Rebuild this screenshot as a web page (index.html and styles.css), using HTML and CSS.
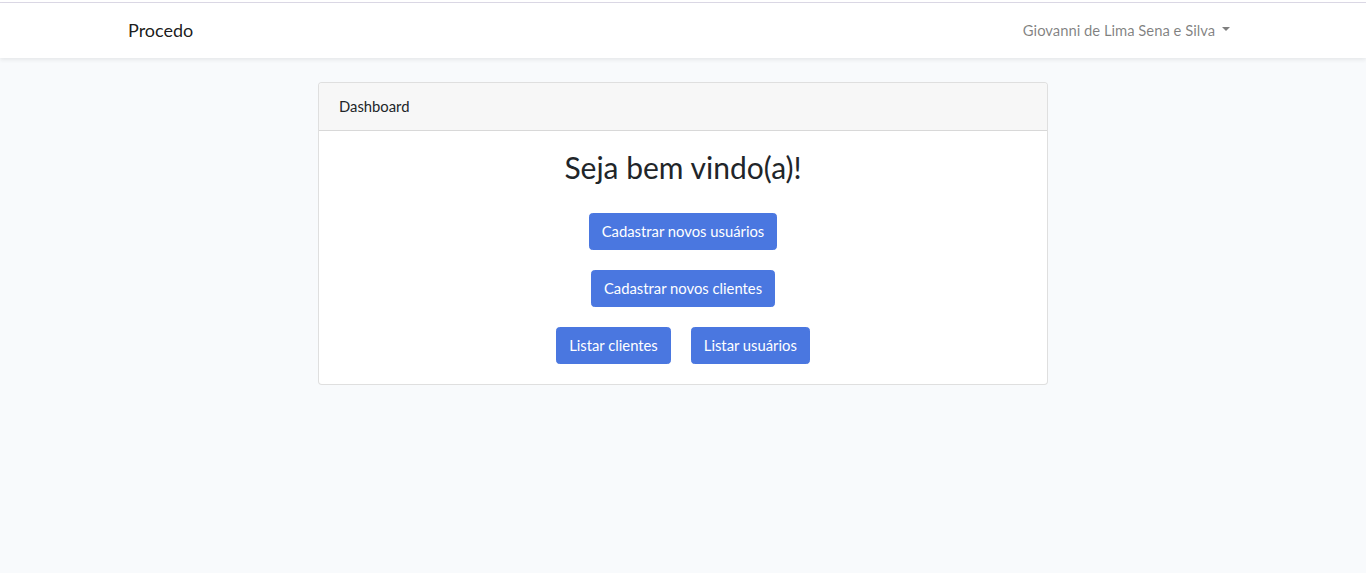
FILE: index.html
```html
<!DOCTYPE html>
<html lang="pt-BR">
<head>
<meta charset="utf-8">
<title>Procedo</title>
<link rel="stylesheet" href="styles.css">
</head>
<body>
<div class="topline"></div>
<nav class="navbar">
  <div class="container nav-inner">
    <a class="brand" href="#">Procedo</a>
    <a class="user" href="#">Giovanni de Lima Sena e Silva<span class="caret"></span></a>
  </div>
</nav>
<main class="main">
  <div class="container center">
    <div class="card">
      <div class="card-header">Dashboard</div>
      <div class="card-body">
        <h2 class="title">Seja bem vindo(a)!</h2>
        <div class="rows">
          <div class="row"><a class="btn" href="#">Cadastrar novos usuários</a></div>
          <div class="row"><a class="btn" href="#">Cadastrar novos clientes</a></div>
          <div class="row"><a class="btn" href="#">Listar clientes</a><a class="btn" href="#">Listar usuários</a></div>
        </div>
      </div>
    </div>
  </div>
</main>
</body>
</html>
```

FILE: styles.css
```css
* { box-sizing: border-box; }
html, body { margin: 0; padding: 0; }
body {
  font-family: "Lato", "Open Sans", sans-serif;
  font-size: 14.8px;
  line-height: 23.04px;
  color: #212529;
  background: #f8fafc;
  min-height: 573px;
}
a { text-decoration: none; }
.topline {
  height: 3px;
  background: #fff;
  border-bottom: 1px solid #dcd9e6;
}
.navbar {
  background: #fff;
  height: 55px;
  box-shadow: 0 2px 4px rgba(0,0,0,0.075);
  position: relative;
}
.container {
  width: 1140px;
  margin: 0 auto;
  padding: 0 15px;
}
.nav-inner {
  display: flex;
  justify-content: space-between;
  align-items: center;
  height: 55px;
}
.brand {
  font-size: 18px;
  line-height: 28px;
  color: rgba(0,0,0,0.9);
  margin-top: -1px;
}
.user {
  color: rgba(0,0,0,0.5);
  padding: 8px 8px;
  display: flex;
  align-items: center;
}
.caret {
  display: inline-block;
  margin-left: 7px;
  border-top: 4.3px solid rgba(0,0,0,0.5);
  border-left: 4.3px solid transparent;
  border-right: 4.3px solid transparent;
  margin-top: -2px;
}
.main { padding: 24px 0; }
.center { display: flex; justify-content: center; }
.card {
  width: 730px;
  background: #fff;
  border: 1px solid rgba(0,0,0,0.125);
  border-radius: 4px;
}
.card-header {
  padding: 12px 20px;
  background: #f7f7f7;
  border-bottom: 1px solid rgba(0,0,0,0.125);
  border-radius: 3px 3px 0 0;
}
.card-body {
  padding: 20px;
  text-align: center;
}
.title {
  margin: -2px 0 0;
  font-size: 30px;
  font-weight: 400;
  line-height: 36px;
}
.rows {
  display: flex;
  flex-direction: column;
  gap: 20px;
  margin-top: 28px;
}
.row {
  display: flex;
  justify-content: center;
  gap: 20px;
}
.btn {
  display: inline-block;
  color: #fff;
  background: #4a77e0;
  border: 1px solid #4a77e0;
  border-radius: 3.6px;
  padding: 6px 12px;
  line-height: 23px;
}
```
